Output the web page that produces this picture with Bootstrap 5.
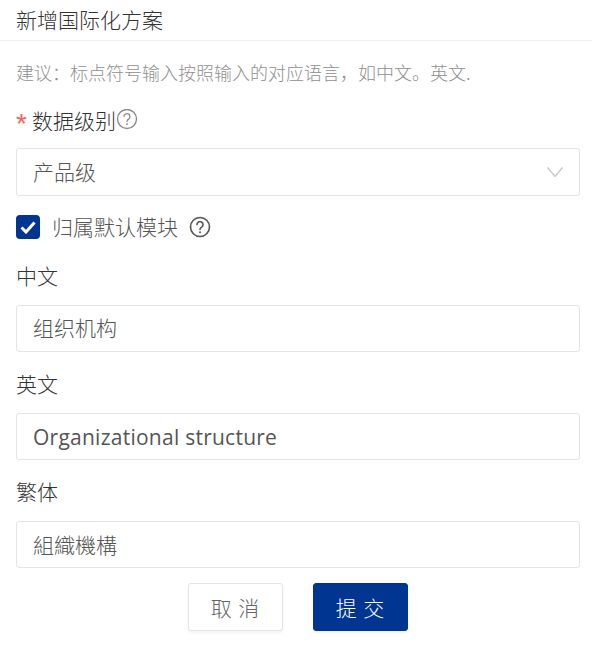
<!DOCTYPE html>
<html lang="zh"><head><meta charset="utf-8">
<link rel="stylesheet" href="https://cdn.jsdelivr.net/npm/bootstrap@5.3.0/dist/css/bootstrap.min.css">
<style>
html,body{height:656px;overflow:hidden;background:#fff}
body{font-family:"Noto Sans CJK SC",sans-serif;color:#333;font-weight:300}
.hd{height:41px;padding:0 16px;border-bottom:1px solid #eee;font-size:21px;line-height:38px;color:#333}
.tip{padding:0 16px;margin-top:19px;height:24px;line-height:24px;font-size:18px;color:#8f8f8f}
.frm{padding:0 12px 0 16px}
.lab{font-size:21px;line-height:28px;height:28px;color:#333;margin-top:17px}
.lab-a{margin-top:22px}
.star{color:#ff5c5c;font-family:"Liberation Sans",sans-serif;font-size:28px;line-height:20px;width:16px;padding-top:8px;font-weight:400}
.fld{height:47px;border:1px solid #e4e4e4;border-radius:3px;padding:0 16px;font-size:21px;color:#555;line-height:43px;background:#fff;margin-top:16px}
.fld-sel{height:48px;margin-top:14px;padding-bottom:2px}
.fld-sel svg{margin-top:2px}
.fld-en{font-family:"Open Sans",sans-serif;font-weight:400;letter-spacing:.25px;line-height:47px}
.fld-tc{font-family:"Noto Sans CJK TC",sans-serif;line-height:45px}
.bx{width:24px;height:24px;background:#003591;border-radius:4px}
.chk{color:#555;font-size:21px;margin-top:19px;height:24px}
.hlp{margin-left:11px}
.lab-b{margin-top:22px}
.acts{gap:30px;margin-top:15px}
.btn-x{width:95px;height:48px;font-size:21px;line-height:1;border-radius:3px;letter-spacing:1px;padding:0;font-weight:300;box-shadow:0 2px 3px rgba(0,0,0,.05)}
.btn-c,.btn-c:hover{background:#fff;border:1px solid #e4e4e4;color:#666}
.btn-p,.btn-p:hover{background:#003591;border:1px solid #003591;color:#fff}
</style></head><body>
<div class="hd">新增国际化方案</div>
<div class="tip">建议：标点符号输入按照输入的对应语言，如中文。英文.</div>
<div class="frm">
<div class="lab lab-a d-flex align-items-center"><span class="star">*</span>数据级别<svg width="22" height="22" viewBox="0 0 22 22" fill="none" stroke="#888" stroke-width="1.3"><circle cx="11" cy="10" r="9.5"/><path d="M8 7.6a3 3 0 1 1 4.6 2.5c-1 .6-1.6 1.1-1.6 2.4" stroke-linecap="round"/><circle cx="11" cy="15.2" r=".9" fill="#888" stroke="none"/></svg></div>
<div class="fld fld-sel d-flex justify-content-between align-items-center">产品级<svg width="16" height="10" viewBox="0 0 16 10" fill="none" stroke="#c4c8cc" stroke-width="1.3"><path d="M.5.5l7.5 9 7.5-9"/></svg></div>
<div class="d-flex align-items-center chk"><span class="bx d-flex align-items-center justify-content-center me-2 flex-shrink-0"><svg width="16" height="13" viewBox="0 0 16 13" fill="none" stroke="#fff" stroke-width="3"><path d="M1.5 6.5l4.5 4.5 8.5-9.5"/></svg></span><span class="ms-1">归属默认模块</span><svg class="hlp flex-shrink-0" width="22" height="22" viewBox="0 0 22 22" fill="none" stroke="#555" stroke-width="1.6"><circle cx="11" cy="11" r="9.5"/><path d="M8 8.6a3 3 0 1 1 4.6 2.5c-1 .6-1.6 1.1-1.6 2.4" stroke-linecap="round"/><circle cx="11" cy="16.2" r="1" fill="#555" stroke="none"/></svg></div>
<div class="lab lab-b">中文</div>
<div class="fld">组织机构</div>
<div class="lab">英文</div>
<div class="fld fld-en">Organizational structure</div>
<div class="lab">繁体</div>
<div class="fld fld-tc">組織機構</div>
<div class="d-flex justify-content-center acts"><button class="btn btn-x btn-c">取 消</button><button class="btn btn-x btn-p">提 交</button></div>
</div>
<script src="https://cdn.jsdelivr.net/npm/bootstrap@5.3.0/dist/js/bootstrap.bundle.min.js"></script>
</body></html>
